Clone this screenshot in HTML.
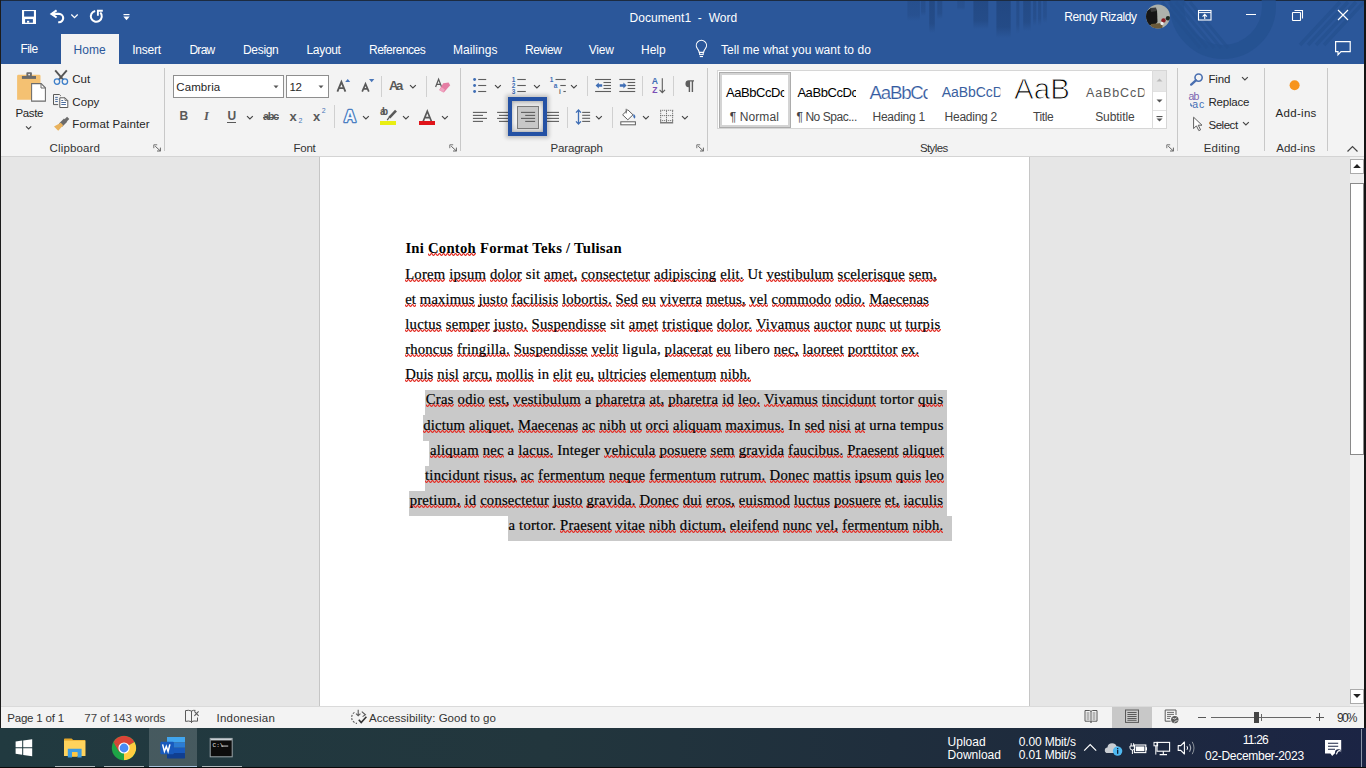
<!DOCTYPE html>
<html><head><meta charset="utf-8"><style>
html,body{margin:0;padding:0;}
body{width:1366px;height:768px;overflow:hidden;position:relative;background:#E6E6E6;font-family:"Liberation Sans", sans-serif;}
.t{position:absolute;white-space:pre;}
.sq{background-image:linear-gradient(90deg,rgba(227,52,44,0.45) 0 1px,transparent 1px 2px,rgba(227,52,44,0.45) 2px 3px,#E3342C 3px 4px),linear-gradient(90deg,#E3342C 0 1px,rgba(227,52,44,0.45) 1px 2px,#E3342C 2px 3px,rgba(227,52,44,0.45) 3px 4px),linear-gradient(90deg,rgba(227,52,44,0.45) 0 1px,#E3342C 1px 2px,rgba(227,52,44,0.45) 2px 3px,transparent 3px 4px);background-size:4px 1px,4px 1px,4px 1px;background-position:0 calc(100% - 2px),0 calc(100% - 1px),0 100%;background-repeat:repeat-x;}
svg{overflow:visible}
</style></head><body>
<div style="position:absolute;left:0px;top:0px;width:1366px;height:64px;background:#2B579A;"></div>
<div style="position:absolute;left:0px;top:0px;width:1366px;height:1px;background:#1c2b40;"></div>
<div style="position:absolute;left:0px;top:0px;width:1px;height:768px;background:#1c1c1c;"></div>
<div class="t" style="left:629.50px;top:11.84px;font-size:12px;line-height:12px;color:#FFFFFF;letter-spacing:0.031px;">Document1  -  Word</div>
<div class="t" style="left:1064.30px;top:11.34px;font-size:12px;line-height:12px;color:#FFFFFF;letter-spacing:-0.389px;">Rendy Rizaldy</div>
<div style="position:absolute;left:61px;top:34px;width:58px;height:30px;background:#F3F3F3;"></div>
<div class="t" style="left:20.50px;top:43.04px;font-size:12px;line-height:12px;color:#FFFFFF;letter-spacing:-0.587px;">File</div>
<div class="t" style="left:73.60px;top:43.84px;font-size:12px;line-height:12px;color:#2B579A;letter-spacing:0.055px;">Home</div>
<div class="t" style="left:132.20px;top:43.84px;font-size:12px;line-height:12px;color:#FFFFFF;letter-spacing:-0.216px;">Insert</div>
<div class="t" style="left:189.40px;top:43.84px;font-size:12px;line-height:12px;color:#FFFFFF;letter-spacing:-0.712px;">Draw</div>
<div class="t" style="left:243.00px;top:43.84px;font-size:12px;line-height:12px;color:#FFFFFF;letter-spacing:-0.316px;">Design</div>
<div class="t" style="left:306.50px;top:43.84px;font-size:12px;line-height:12px;color:#FFFFFF;letter-spacing:-0.319px;">Layout</div>
<div class="t" style="left:369.00px;top:43.84px;font-size:12px;line-height:12px;color:#FFFFFF;letter-spacing:-0.518px;">References</div>
<div class="t" style="left:453.00px;top:43.84px;font-size:12px;line-height:12px;color:#FFFFFF;letter-spacing:0.069px;">Mailings</div>
<div class="t" style="left:525.00px;top:43.84px;font-size:12px;line-height:12px;color:#FFFFFF;letter-spacing:-0.496px;">Review</div>
<div class="t" style="left:588.70px;top:43.84px;font-size:12px;line-height:12px;color:#FFFFFF;letter-spacing:-0.209px;">View</div>
<div class="t" style="left:641.00px;top:43.84px;font-size:12px;line-height:12px;color:#FFFFFF;letter-spacing:-0.035px;">Help</div>
<div class="t" style="left:721.00px;top:43.84px;font-size:12px;line-height:12px;color:#FFFFFF;letter-spacing:0.069px;">Tell me what you want to do</div>
<div style="position:absolute;left:1px;top:64px;width:1365px;height:92px;background:#F3F3F3;"></div>
<div style="position:absolute;left:1px;top:156px;width:1365px;height:1px;background:#D4D4D4;"></div>
<div style="position:absolute;left:164px;top:68px;width:1px;height:83px;background:#C8C8C8;"></div>
<div style="position:absolute;left:460px;top:68px;width:1px;height:83px;background:#C8C8C8;"></div>
<div style="position:absolute;left:707px;top:68px;width:1px;height:83px;background:#C8C8C8;"></div>
<div style="position:absolute;left:1177px;top:68px;width:1px;height:83px;background:#C8C8C8;"></div>
<div style="position:absolute;left:1264px;top:68px;width:1px;height:83px;background:#C8C8C8;"></div>
<div style="position:absolute;left:1327px;top:68px;width:1px;height:83px;background:#C8C8C8;"></div>
<div class="t" style="left:49.50px;top:143.06px;font-size:11.5px;line-height:11.5px;color:#333333;letter-spacing:0.159px;">Clipboard</div>
<div class="t" style="left:293.50px;top:143.06px;font-size:11.5px;line-height:11.5px;color:#333333;letter-spacing:-0.239px;">Font</div>
<div class="t" style="left:550.60px;top:143.06px;font-size:11.5px;line-height:11.5px;color:#333333;letter-spacing:-0.189px;">Paragraph</div>
<div class="t" style="left:920.00px;top:143.06px;font-size:11.5px;line-height:11.5px;color:#333333;letter-spacing:-0.633px;">Styles</div>
<div class="t" style="left:1203.70px;top:143.06px;font-size:11.5px;line-height:11.5px;color:#333333;letter-spacing:0.189px;">Editing</div>
<div class="t" style="left:1276.20px;top:143.06px;font-size:11.5px;line-height:11.5px;color:#333333;letter-spacing:0.026px;">Add-ins</div>
<div class="t" style="left:15.60px;top:107.96px;font-size:11.5px;line-height:11.5px;color:#262626;letter-spacing:-0.403px;">Paste</div>
<div class="t" style="left:72.30px;top:73.86px;font-size:11.5px;line-height:11.5px;color:#262626;letter-spacing:-0.050px;">Cut</div>
<div class="t" style="left:72.30px;top:96.66px;font-size:11.5px;line-height:11.5px;color:#262626;letter-spacing:0.068px;">Copy</div>
<div class="t" style="left:72.30px;top:119.46px;font-size:11.5px;line-height:11.5px;color:#262626;letter-spacing:0.091px;">Format Painter</div>
<div style="position:absolute;left:173px;top:75px;width:111px;height:23px;background:#FFFFFF;border:1px solid #8E8E8E;box-sizing:border-box;"></div>
<div style="position:absolute;left:286px;top:75px;width:43px;height:23px;background:#FFFFFF;border:1px solid #8E8E8E;box-sizing:border-box;"></div>
<div class="t" style="left:176.30px;top:81.86px;font-size:11.5px;line-height:11.5px;color:#262626;letter-spacing:0.073px;">Cambria</div>
<div class="t" style="left:289.40px;top:81.86px;font-size:11.5px;line-height:11.5px;color:#262626;letter-spacing:-0.196px;">12</div>
<div style="position:absolute;left:717px;top:70px;width:450px;height:59px;background:#FFFFFF;border:1px solid #D6D6D6;box-sizing:border-box;"></div>
<div class="t" style="left:726.00px;top:85.59px;font-size:13px;line-height:13px;color:#000000;letter-spacing:-0.440px;clip-path:inset(-13.59px 1.86px -29.41px -4.00px);">AaBbCcDc</div>
<div class="t" style="left:729.70px;top:110.74px;font-size:12px;line-height:12px;color:#444444;letter-spacing:0.102px;">¶ Normal</div>
<div class="t" style="left:797.40px;top:85.59px;font-size:13px;line-height:13px;color:#000000;letter-spacing:-0.440px;clip-path:inset(-13.59px 1.46px -29.41px -4.40px);">AaBbCcDc</div>
<div class="t" style="left:796.50px;top:110.74px;font-size:12px;line-height:12px;color:#444444;letter-spacing:-0.452px;">¶ No Spac...</div>
<div class="t" style="left:869.60px;top:84.17px;font-size:18.7px;line-height:18.7px;color:#3259A0;letter-spacing:-1.242px;-webkit-text-stroke:0.2px #fff;clip-path:inset(-12.17px 3.10px -25.13px -4.60px);">AaBbCc</div>
<div class="t" style="left:872.50px;top:110.74px;font-size:12px;line-height:12px;color:#444444;letter-spacing:-0.254px;">Heading 1</div>
<div class="t" style="left:941.80px;top:85.45px;font-size:14px;line-height:14px;color:#3A5FA0;letter-spacing:-0.060px;clip-path:inset(-13.45px 2.45px -28.55px -4.80px);">AaBbCcD</div>
<div class="t" style="left:944.60px;top:110.74px;font-size:12px;line-height:12px;color:#444444;letter-spacing:-0.254px;">Heading 2</div>
<div class="t" style="left:1014.00px;top:73.82px;font-size:29.5px;line-height:29.5px;color:#000000;letter-spacing:0.059px;-webkit-text-stroke:1px #fff;clip-path:inset(5.78px -10.07px -24.68px -6.00px);">AaB</div>
<div class="t" style="left:1033.00px;top:110.74px;font-size:12px;line-height:12px;color:#444444;letter-spacing:-0.413px;">Title</div>
<div class="t" style="left:1086.00px;top:87.02px;font-size:12.5px;line-height:12.5px;color:#595959;letter-spacing:0.857px;clip-path:inset(-15.02px 2.38px -28.48px -6.00px);">AaBbCcD</div>
<div class="t" style="left:1095.20px;top:110.74px;font-size:12px;line-height:12px;color:#444444;letter-spacing:-0.079px;">Subtitle</div>
<div class="t" style="left:1208.50px;top:73.76px;font-size:11.5px;line-height:11.5px;color:#262626;letter-spacing:-0.158px;">Find</div>
<div class="t" style="left:1208.50px;top:97.06px;font-size:11.5px;line-height:11.5px;color:#262626;letter-spacing:-0.216px;">Replace</div>
<div class="t" style="left:1208.50px;top:119.66px;font-size:11.5px;line-height:11.5px;color:#262626;letter-spacing:-0.473px;">Select</div>
<div class="t" style="left:1275.50px;top:107.76px;font-size:11.5px;line-height:11.5px;color:#262626;letter-spacing:0.310px;">Add-ins</div>
<div style="position:absolute;left:1px;top:157px;width:1349px;height:549px;background:#E6E6E6;"></div>
<div style="position:absolute;left:319px;top:157px;width:1px;height:549px;background:#C6C6C6;"></div>
<div style="position:absolute;left:1029px;top:157px;width:1px;height:549px;background:#C6C6C6;"></div>
<div style="position:absolute;left:320px;top:157px;width:709px;height:549px;background:#FFFFFF;"></div>
<div style="position:absolute;left:1350px;top:157px;width:14px;height:549px;background:#F0F0F0;"></div>
<div style="position:absolute;left:1364px;top:157px;width:2px;height:549px;background:#1c1c1c;"></div>
<div style="position:absolute;left:1px;top:706px;width:1365px;height:22px;background:#F3F3F3;"></div>
<div style="position:absolute;left:1px;top:706px;width:1365px;height:1px;background:#DADADA;"></div>
<div class="t" style="left:7.20px;top:713.06px;font-size:11.5px;line-height:11.5px;color:#333333;letter-spacing:-0.183px;">Page 1 of 1</div>
<div class="t" style="left:84.30px;top:713.06px;font-size:11.5px;line-height:11.5px;color:#444444;letter-spacing:-0.056px;">77 of 143 words</div>
<div class="t" style="left:216.50px;top:713.06px;font-size:11.5px;line-height:11.5px;color:#333333;letter-spacing:0.236px;">Indonesian</div>
<div class="t" style="left:369.00px;top:713.06px;font-size:11.5px;line-height:11.5px;color:#333333;letter-spacing:0.041px;">Accessibility: Good to go</div>
<div style="position:absolute;left:1112px;top:707px;width:40px;height:21px;background:#C8C8C8;"></div>
<div class="t" style="left:1337.00px;top:711.84px;font-size:12px;line-height:12px;color:#333333;letter-spacing:-1.774px;">90%</div>
<div style="position:absolute;left:0px;top:728px;width:1366px;height:40px;background:linear-gradient(90deg,#213A40 0%,#22363D 40%,#1E2B3D 75%,#1B2444 100%);"></div>
<div style="position:absolute;left:149px;top:728px;width:48px;height:40px;background:rgba(255,255,255,0.17);"></div>
<div class="t" style="left:947.60px;top:736.04px;font-size:12px;line-height:12px;color:#FFFFFF;">Upload</div>
<div class="t" style="left:947.60px;top:748.84px;font-size:12px;line-height:12px;color:#FFFFFF;">Download</div>
<div class="t" style="left:1018.70px;top:736.04px;font-size:12px;line-height:12px;color:#FFFFFF;letter-spacing:-0.149px;">0.00 Mbit/s</div>
<div class="t" style="left:1018.70px;top:748.84px;font-size:12px;line-height:12px;color:#FFFFFF;letter-spacing:-0.149px;">0.01 Mbit/s</div>
<div class="t" style="left:1242.80px;top:733.84px;font-size:12px;line-height:12px;color:#FFFFFF;letter-spacing:-0.816px;">11:26</div>
<div class="t" style="left:1205.00px;top:750.44px;font-size:12px;line-height:12px;color:#FFFFFF;letter-spacing:-0.288px;">02-December-2023</div>
<div style="position:absolute;left:425.3px;top:390.2px;width:521.8px;height:25.349999999999998px;background:#C9C9C9;"></div>
<div style="position:absolute;left:422.7px;top:415.35px;width:524.4px;height:25.349999999999998px;background:#C9C9C9;"></div>
<div style="position:absolute;left:429.4px;top:440.5px;width:517.7px;height:25.349999999999998px;background:#C9C9C9;"></div>
<div style="position:absolute;left:424.7px;top:465.65px;width:522.4px;height:25.349999999999998px;background:#C9C9C9;"></div>
<div style="position:absolute;left:409.0px;top:490.8px;width:538.1px;height:25.349999999999998px;background:#C9C9C9;"></div>
<div style="position:absolute;left:508.0px;top:515.95px;width:443.9px;height:25.349999999999998px;background:#C9C9C9;"></div>
<div class="t" style="left:405.40px;top:240.59px;font-size:14.7px;line-height:14.7px;color:#000000;font-family:'Liberation Serif', serif;font-weight:bold;letter-spacing:0.245px;">Ini <span class="sq">Contoh</span> Format Teks / Tulisan</div>
<div class="t" style="left:405.20px;top:266.74px;font-size:14.7px;line-height:14.7px;color:#000000;font-family:'Liberation Serif', serif;letter-spacing:0.193px;-webkit-text-stroke:0.2px #000;"><span class="sq">Lorem</span> <span class="sq">ipsum</span> <span class="sq">dolor</span> sit <span class="sq">amet,</span> <span class="sq">consectetur</span> <span class="sq">adipiscing</span> <span class="sq">elit.</span> Ut <span class="sq">vestibulum</span> <span class="sq">scelerisque</span> <span class="sq">sem,</span></div>
<div class="t" style="left:405.20px;top:291.89px;font-size:14.7px;line-height:14.7px;color:#000000;font-family:'Liberation Serif', serif;letter-spacing:0.126px;-webkit-text-stroke:0.2px #000;"><span class="sq">et</span> <span class="sq">maximus</span> <span class="sq">justo</span> <span class="sq">facilisis</span> <span class="sq">lobortis.</span> <span class="sq">Sed</span> <span class="sq">eu</span> <span class="sq">viverra</span> <span class="sq">metus,</span> <span class="sq">vel</span> <span class="sq">commodo</span> <span class="sq">odio.</span> <span class="sq">Maecenas</span></div>
<div class="t" style="left:405.20px;top:317.04px;font-size:14.7px;line-height:14.7px;color:#000000;font-family:'Liberation Serif', serif;letter-spacing:0.263px;-webkit-text-stroke:0.2px #000;"><span class="sq">luctus</span> <span class="sq">semper</span> <span class="sq">justo.</span> <span class="sq">Suspendisse</span> sit <span class="sq">amet</span> <span class="sq">tristique</span> <span class="sq">dolor.</span> <span class="sq">Vivamus</span> <span class="sq">auctor</span> <span class="sq">nunc</span> <span class="sq">ut</span> <span class="sq">turpis</span></div>
<div class="t" style="left:405.20px;top:342.19px;font-size:14.7px;line-height:14.7px;color:#000000;font-family:'Liberation Serif', serif;letter-spacing:0.188px;-webkit-text-stroke:0.2px #000;"><span class="sq">rhoncus</span> <span class="sq">fringilla.</span> <span class="sq">Suspendisse</span> <span class="sq">velit</span> ligula, <span class="sq">placerat</span> <span class="sq">eu</span> libero <span class="sq">nec,</span> <span class="sq">laoreet</span> <span class="sq">porttitor</span> <span class="sq">ex.</span></div>
<div class="t" style="left:405.20px;top:367.34px;font-size:14.7px;line-height:14.7px;color:#000000;font-family:'Liberation Serif', serif;letter-spacing:0.126px;-webkit-text-stroke:0.2px #000;"><span class="sq">Duis</span> <span class="sq">nisl</span> <span class="sq">arcu,</span> <span class="sq">mollis</span> in <span class="sq">elit</span> <span class="sq">eu,</span> <span class="sq">ultricies</span> <span class="sq">elementum</span> <span class="sq">nibh.</span></div>
<div class="t" style="left:425.80px;top:392.49px;font-size:14.7px;line-height:14.7px;color:#000000;font-family:'Liberation Serif', serif;letter-spacing:0.231px;-webkit-text-stroke:0.2px #000;"><span class="sq">Cras</span> <span class="sq">odio</span> <span class="sq">est,</span> <span class="sq">vestibulum</span> a <span class="sq">pharetra</span> <span class="sq">at,</span> <span class="sq">pharetra</span> <span class="sq">id</span> <span class="sq">leo.</span> <span class="sq">Vivamus</span> <span class="sq">tincidunt</span> tortor <span class="sq">quis</span></div>
<div class="t" style="left:423.20px;top:417.64px;font-size:14.7px;line-height:14.7px;color:#000000;font-family:'Liberation Serif', serif;letter-spacing:0.181px;-webkit-text-stroke:0.2px #000;"><span class="sq">dictum</span> <span class="sq">aliquet.</span> <span class="sq">Maecenas</span> <span class="sq">ac</span> <span class="sq">nibh</span> <span class="sq">ut</span> <span class="sq">orci</span> <span class="sq">aliquam</span> <span class="sq">maximus.</span> In <span class="sq">sed</span> <span class="sq">nisi</span> <span class="sq">at</span> urna tempus</div>
<div class="t" style="left:430.00px;top:442.79px;font-size:14.7px;line-height:14.7px;color:#000000;font-family:'Liberation Serif', serif;letter-spacing:0.208px;-webkit-text-stroke:0.2px #000;"><span class="sq">aliquam</span> <span class="sq">nec</span> a <span class="sq">lacus.</span> Integer <span class="sq">vehicula</span> <span class="sq">posuere</span> <span class="sq">sem</span> <span class="sq">gravida</span> <span class="sq">faucibus.</span> <span class="sq">Praesent</span> <span class="sq">aliquet</span></div>
<div class="t" style="left:425.00px;top:467.94px;font-size:14.7px;line-height:14.7px;color:#000000;font-family:'Liberation Serif', serif;letter-spacing:0.267px;-webkit-text-stroke:0.2px #000;"><span class="sq">tincidunt</span> <span class="sq">risus,</span> <span class="sq">ac</span> <span class="sq">fermentum</span> <span class="sq">neque</span> <span class="sq">fermentum</span> <span class="sq">rutrum.</span> <span class="sq">Donec</span> <span class="sq">mattis</span> <span class="sq">ipsum</span> <span class="sq">quis</span> <span class="sq">leo</span></div>
<div class="t" style="left:409.70px;top:493.09px;font-size:14.7px;line-height:14.7px;color:#000000;font-family:'Liberation Serif', serif;letter-spacing:0.190px;-webkit-text-stroke:0.2px #000;"><span class="sq">pretium,</span> <span class="sq">id</span> <span class="sq">consectetur</span> <span class="sq">justo</span> <span class="sq">gravida.</span> <span class="sq">Donec</span> <span class="sq">dui</span> <span class="sq">eros,</span> <span class="sq">euismod</span> <span class="sq">luctus</span> <span class="sq">posuere</span> <span class="sq">et,</span> <span class="sq">iaculis</span></div>
<div class="t" style="left:508.50px;top:518.24px;font-size:14.7px;line-height:14.7px;color:#000000;font-family:'Liberation Serif', serif;letter-spacing:0.217px;-webkit-text-stroke:0.2px #000;">a tortor. <span class="sq">Praesent</span> <span class="sq">vitae</span> <span class="sq">nibh</span> <span class="sq">dictum,</span> <span class="sq">eleifend</span> <span class="sq">nunc</span> <span class="sq">vel,</span> <span class="sq">fermentum</span> <span class="sq">nibh.</span></div>
<svg style="position:absolute;left:22px;top:10px;" width="14" height="14" viewBox="0 0 14 14"><rect x="0" y="0" width="14" height="14" fill="#FFFFFF"/><rect x="2.1" y="1.1" width="9.8" height="5.5" fill="#2B579A"/><rect x="3.1" y="9.1" width="7.8" height="3.6" fill="#2B579A"/><rect x="5" y="10.8" width="2.2" height="1.9" fill="#FFFFFF"/></svg>
<svg style="position:absolute;left:50px;top:9px;" width="16" height="15" viewBox="0 0 16 15"><path d="M6.6 1.3 L1.5 4.9 L6.6 8.5" fill="none" stroke="#FFFFFF" stroke-width="2.1" stroke-linejoin="miter"/><path d="M2 4.9 H9 A4.2 4.2 0 0 1 9 13.3 H8.2" fill="none" stroke="#FFFFFF" stroke-width="2.1"/></svg>
<svg style="position:absolute;left:70px;top:13px;" width="9" height="6" viewBox="0 0 9 6"><path d="M1.3 1.5 L4.5 4.6 L7.7 1.5" fill="none" stroke="#FFFFFF" stroke-width="1.3"/></svg>
<svg style="position:absolute;left:89px;top:9px;" width="16" height="15" viewBox="0 0 16 15"><path d="M6.2 1.9 A5.5 5.5 0 1 0 11.3 3.5" fill="none" stroke="#FFFFFF" stroke-width="2"/><path d="M8.9 6.8 V1.8 H13.8" fill="none" stroke="#FFFFFF" stroke-width="1.9"/></svg>
<svg style="position:absolute;left:122px;top:13px;" width="9" height="9" viewBox="0 0 9 9"><rect x="1.5" y="1" width="6" height="1.2" fill="#FFFFFF"/><path d="M1.3 3.4 H7.7 L4.5 7.3 Z" fill="#FFFFFF"/></svg>
<svg style="position:absolute;left:900px;top:0px;" width="466" height="64" viewBox="0 0 466 64"><defs><linearGradient id="bf" x1="0" y1="0" x2="0" y2="1"><stop offset="0" stop-color="#21467F" stop-opacity="1"/><stop offset="0.7" stop-color="#21467F" stop-opacity="0.8"/><stop offset="1" stop-color="#21467F" stop-opacity="0"/></linearGradient></defs><rect x="7.4" y="1" width="12.5" height="20" fill="url(#bf)" opacity="0.45"/><rect x="21.0" y="1" width="4.5" height="15" fill="url(#bf)" opacity="0.5"/><rect x="29.2" y="1" width="5.6" height="32" fill="url(#bf)" opacity="0.8"/><rect x="37.3" y="1" width="5" height="18" fill="url(#bf)" opacity="0.6"/><rect x="57.2" y="1" width="7.5" height="9" fill="url(#bf)" opacity="0.4"/><rect x="73.4" y="1" width="14.9" height="28" fill="url(#bf)" opacity="0.8"/><rect x="96.4" y="1" width="14.3" height="37" fill="url(#bf)" opacity="0.9"/><rect x="116.3" y="1" width="3.1" height="33" fill="url(#bf)" opacity="0.6"/><rect x="123.2" y="1" width="7.5" height="30" fill="url(#bf)" opacity="0.75"/><rect x="133.1" y="1" width="3.2" height="25" fill="url(#bf)" opacity="0.6"/><rect x="138.1" y="1" width="3.1" height="25" fill="url(#bf)" opacity="0.6"/><rect x="143.1" y="1" width="3.7" height="22" fill="url(#bf)" opacity="0.5"/><circle cx="323" cy="6" r="46" fill="none" stroke="#24508F" stroke-width="14" opacity="0.75"/><line x1="262" y1="2" x2="300" y2="48" stroke="#24508F" stroke-width="3" opacity="0.7"/><line x1="269" y1="2" x2="307" y2="48" stroke="#24508F" stroke-width="3" opacity="0.7"/><line x1="276" y1="2" x2="314" y2="48" stroke="#24508F" stroke-width="3" opacity="0.7"/><line x1="283" y1="2" x2="321" y2="48" stroke="#24508F" stroke-width="3" opacity="0.7"/><line x1="290" y1="2" x2="328" y2="48" stroke="#24508F" stroke-width="3" opacity="0.7"/><line x1="440" y1="2" x2="400" y2="45" stroke="#24508F" stroke-width="3.5" opacity="0.7"/><line x1="448" y1="2" x2="408" y2="45" stroke="#24508F" stroke-width="3.5" opacity="0.7"/><line x1="456" y1="2" x2="416" y2="45" stroke="#24508F" stroke-width="3.5" opacity="0.7"/><line x1="464" y1="2" x2="424" y2="45" stroke="#24508F" stroke-width="3.5" opacity="0.7"/></svg>
<svg style="position:absolute;left:1145px;top:4px;" width="26" height="26" viewBox="0 0 26 26"><defs><clipPath id="av"><circle cx="13" cy="12.6" r="12"/></clipPath><filter id="avb"><feGaussianBlur stdDeviation="0.7"/></filter></defs><g clip-path="url(#av)"><rect width="26" height="26" fill="#AEB2AC"/><g filter="url(#avb)"><path d="M1 9 Q3 4 8 4.5 L12 6 L12.5 18 L9 22 L3 21 L1 15 Z" fill="#151815"/><path d="M5 4 L11 3.5 L12 7 L6 8 Z" fill="#3a3a3a"/><path d="M6 20 L17 19 L18 26 L5 26 Z" fill="#6B5A3A"/><circle cx="18.5" cy="16.4" r="2.2" fill="#8A1A22"/><circle cx="23" cy="14.2" r="2.2" fill="#1E2A22"/><circle cx="17" cy="19.4" r="1.6" fill="#F0F0F0"/></g></g></svg>
<svg style="position:absolute;left:1197px;top:9px;" width="16" height="13" viewBox="0 0 16 13"><rect x="1.5" y="1.5" width="12.5" height="9.5" fill="none" stroke="#FFFFFF" stroke-width="1.1"/><line x1="1.5" y1="3.6" x2="14" y2="3.6" stroke="#FFFFFF" stroke-width="1"/><path d="M7.75 10 V5.6 M5.6 7.6 L7.75 5.4 L9.9 7.6" fill="none" stroke="#FFFFFF" stroke-width="1.1"/></svg>
<div style="position:absolute;left:1246px;top:14px;width:10px;height:1px;background:#FFFFFF;"></div>
<svg style="position:absolute;left:1291px;top:9px;" width="13" height="13" viewBox="0 0 13 13"><rect x="1.5" y="3.5" width="8" height="8" fill="none" stroke="#FFFFFF" stroke-width="1.1" rx="0.5"/><path d="M3.5 1.5 H11.5 V9.5" fill="none" stroke="#FFFFFF" stroke-width="1.1"/></svg>
<svg style="position:absolute;left:1337px;top:9px;" width="12" height="12" viewBox="0 0 12 12"><path d="M1 1 L11 11 M11 1 L1 11" stroke="#FFFFFF" stroke-width="1.2"/></svg>
<svg style="position:absolute;left:1334px;top:40px;" width="18" height="17" viewBox="0 0 18 17"><path d="M1.6 1.6 H16.2 V11.6 H7 L4 14.8 V11.6 H1.6 Z" fill="none" stroke="#FFFFFF" stroke-width="1.2" stroke-linejoin="miter"/></svg>
<svg style="position:absolute;left:16px;top:71px;" width="30" height="32" viewBox="0 0 30 32"><path d="M1.1 5 Q1.1 3.7 2.4 3.7 H23.2 Q24.5 3.7 24.5 5 V28.7 H1.1 Z" fill="#F4C172"/><rect x="5.9" y="5" width="14.1" height="2.9" fill="#6B6B6B"/><rect x="10.4" y="1.2" width="5.5" height="4.2" rx="0.8" fill="#6B6B6B"/><circle cx="13.1" cy="3.6" r="0.9" fill="#F3F3F3"/><path d="M15.6 12.6 H25.2 L29.4 16.8 V30.1 H15.6 Z" fill="#FFFFFF" stroke="#6B6B6B" stroke-width="1.05"/><path d="M25 12.6 V17 H29.4" fill="none" stroke="#6B6B6B" stroke-width="1"/></svg>
<svg style="position:absolute;left:25px;top:125px;" width="8" height="6" viewBox="0 0 8 6"><path d="M1 1.3 L3.6 3.9 L6.2 1.3" fill="none" stroke="#444" stroke-width="1.1"/></svg>
<svg style="position:absolute;left:53px;top:69px;" width="16" height="17" viewBox="0 0 16 17"><path d="M2.2 1.4 L10.4 10.8 M13.8 1.4 L5.6 10.8" stroke="#555555" stroke-width="1.9"/><circle cx="4" cy="12.6" r="2.7" fill="none" stroke="#3E7FC9" stroke-width="1.3"/><circle cx="11.9" cy="12.6" r="2.7" fill="none" stroke="#3E7FC9" stroke-width="1.3"/></svg>
<svg style="position:absolute;left:52px;top:93px;" width="17" height="16" viewBox="0 0 17 16"><path d="M6.2 11.6 H1.5 V1.5 H7.4 L8.8 2.9" fill="none" stroke="#5A5A5A" stroke-width="1"/><rect x="3.2" y="3.9" width="2.6" height="1" fill="#4D6E9E"/><rect x="3.2" y="5.9" width="2.6" height="1" fill="#4D6E9E"/><rect x="3.2" y="8" width="2.6" height="1" fill="#4D6E9E"/><path d="M7.8 4.8 H13 L15.8 7.6 V14.5 H7.8 Z" fill="#FFFFFF" stroke="#5A5A5A" stroke-width="1"/><path d="M13 4.8 V7.6 H15.8" fill="none" stroke="#5A5A5A" stroke-width="0.8"/><rect x="9.3" y="7" width="1.9" height="1" fill="#4D6E9E"/><rect x="9.3" y="9" width="4.6" height="1" fill="#4D6E9E"/><rect x="9.3" y="11" width="4.6" height="1" fill="#4D6E9E"/></svg>
<svg style="position:absolute;left:53px;top:116px;" width="17" height="16" viewBox="0 0 17 16"><path d="M15.2 1.8 L12.2 4.8" stroke="#6B6B6B" stroke-width="3.2"/><path d="M12.6 4.2 L7.6 9.2" stroke="#6B6B6B" stroke-width="4.6"/><path d="M7.8 6.8 L10.2 9.2 L5.2 14.8 L1 10.6 Z" fill="#E9B25C"/></svg>
<svg style="position:absolute;left:153px;top:144px;" width="9" height="8" viewBox="0 0 9 8"><path d="M0.8 0.8 H4.2 M0.8 0.8 V4.2" stroke="#666" stroke-width="0.9" fill="none"/><path d="M2.2 2.2 L7.4 7 M7.4 3.6 V7 H4" stroke="#666" stroke-width="1" fill="none"/></svg>
<svg style="position:absolute;left:448.5px;top:144px;" width="9" height="8" viewBox="0 0 9 8"><path d="M0.8 0.8 H4.2 M0.8 0.8 V4.2" stroke="#666" stroke-width="0.9" fill="none"/><path d="M2.2 2.2 L7.4 7 M7.4 3.6 V7 H4" stroke="#666" stroke-width="1" fill="none"/></svg>
<svg style="position:absolute;left:695.5px;top:144px;" width="9" height="8" viewBox="0 0 9 8"><path d="M0.8 0.8 H4.2 M0.8 0.8 V4.2" stroke="#666" stroke-width="0.9" fill="none"/><path d="M2.2 2.2 L7.4 7 M7.4 3.6 V7 H4" stroke="#666" stroke-width="1" fill="none"/></svg>
<svg style="position:absolute;left:1165.5px;top:144px;" width="9" height="8" viewBox="0 0 9 8"><path d="M0.8 0.8 H4.2 M0.8 0.8 V4.2" stroke="#666" stroke-width="0.9" fill="none"/><path d="M2.2 2.2 L7.4 7 M7.4 3.6 V7 H4" stroke="#666" stroke-width="1" fill="none"/></svg>
<svg style="position:absolute;left:273px;top:85px;" width="7" height="4" viewBox="0 0 7 4"><path d="M0.5 0.5 H5.5 L3 3.2 Z" fill="#555"/></svg>
<svg style="position:absolute;left:318px;top:85px;" width="7" height="4" viewBox="0 0 7 4"><path d="M0.5 0.5 H5.5 L3 3.2 Z" fill="#555"/></svg>
<svg style="position:absolute;left:336px;top:78px;" width="16" height="15" viewBox="0 0 16 15"><path d="M1.4 13.7 L5.4 3.9 L9.4 13.7 M2.9 10.2 H7.9" fill="none" stroke="#595959" stroke-width="1.8"/><path d="M9.2 4 L11.7 1 L14.2 4 Z" fill="#4A76B8"/></svg>
<svg style="position:absolute;left:361px;top:78px;" width="15" height="15" viewBox="0 0 15 15"><path d="M1.2 13.7 L4.5 5.9 L7.8 13.7 M2.5 10.9 H6.5" fill="none" stroke="#595959" stroke-width="1.7"/><path d="M8 1 H13.3 L10.65 4.2 Z" fill="#4A76B8"/></svg>
<div class="t" style="left:389.00px;top:78.99px;font-size:13px;line-height:13px;color:#595959;font-weight:bold;letter-spacing:-2.388px;">Aa</div>
<svg style="position:absolute;left:409px;top:84px;" width="8" height="6" viewBox="0 0 8 6"><path d="M1 1.2 L3.9 4 L6.8 1.2" fill="none" stroke="#444" stroke-width="1.15"/></svg>
<svg style="position:absolute;left:434px;top:78px;" width="18" height="17" viewBox="0 0 18 17"><path d="M1.6 9 L4.6 1.2 L7.6 9 M2.6 6.4 H6.6" fill="none" stroke="#595959" stroke-width="1.2"/><path d="M9.2 5.2 L14.6 4.6 L16.2 7.2 L9.8 14.6 L5.2 12 Z" fill="#E57DA3"/><path d="M5.2 12 L7.6 9.2 L10.8 11.6 L9.2 14.6 Z" fill="#EFA3BF"/></svg>
<div class="t" style="left:179.60px;top:110.44px;font-size:12px;line-height:12px;color:#595959;font-weight:bold;">B</div>
<div class="t" style="left:204.00px;top:110.13px;font-size:12.5px;line-height:12.5px;color:#595959;font-family:'Liberation Serif', serif;font-weight:bold;font-style:italic;">I</div>
<div class="t" style="left:227.40px;top:110.44px;font-size:12px;line-height:12px;color:#595959;font-weight:bold;">U</div>
<div style="position:absolute;left:227.4px;top:122px;width:8.2px;height:1.2px;background:#595959;"></div>
<svg style="position:absolute;left:246px;top:114.5px;" width="8" height="6" viewBox="0 0 8 6"><path d="M1 1.2 L3.9 4 L6.8 1.2" fill="none" stroke="#444" stroke-width="1.15"/></svg>
<div class="t" style="left:263.10px;top:111.29px;font-size:11px;line-height:11px;color:#595959;font-weight:bold;letter-spacing:-1.518px;">abc</div>
<div style="position:absolute;left:262.6px;top:116.6px;width:16.8px;height:1.1px;background:#595959;"></div>
<div class="t" style="left:289.40px;top:109.59px;font-size:13px;line-height:13px;color:#595959;font-weight:bold;">x</div>
<div class="t" style="left:298.40px;top:117.07px;font-size:7px;line-height:7px;color:#4A76B8;">2</div>
<div class="t" style="left:312.90px;top:109.59px;font-size:13px;line-height:13px;color:#595959;font-weight:bold;">x</div>
<div class="t" style="left:321.80px;top:106.57px;font-size:7px;line-height:7px;color:#4A76B8;">2</div>
<svg style="position:absolute;left:341px;top:107px;" width="18" height="18" viewBox="0 0 18 18"><text x="9" y="15.2" text-anchor="middle" font-family="Liberation Sans" font-weight="bold" font-size="16.5" fill="#F4F8FD" stroke="#4C7EC0" stroke-width="2.6" paint-order="stroke fill" stroke-linejoin="round">A</text></svg>
<svg style="position:absolute;left:362px;top:114.8px;" width="8" height="6" viewBox="0 0 8 6"><path d="M1 1.2 L3.9 4 L6.8 1.2" fill="none" stroke="#444" stroke-width="1.15"/></svg>
<div class="t" style="left:380.00px;top:106.83px;font-size:10px;line-height:10px;color:#595959;font-weight:bold;letter-spacing:-3.562px;">ab</div>
<svg style="position:absolute;left:385px;top:109px;" width="13" height="13" viewBox="0 0 13 13"><path d="M11 1.6 L4.4 8.6" stroke="#595959" stroke-width="2.6"/><path d="M5.2 7.4 L2.2 11 L3.6 9.2 Z" stroke="#595959" stroke-width="1.2"/></svg>
<div style="position:absolute;left:380px;top:120.6px;width:16.2px;height:4.7px;background:#E9EE12;"></div>
<svg style="position:absolute;left:402px;top:114.8px;" width="8" height="6" viewBox="0 0 8 6"><path d="M1 1.2 L3.9 4 L6.8 1.2" fill="none" stroke="#444" stroke-width="1.15"/></svg>
<svg style="position:absolute;left:421px;top:109px;" width="13" height="13" viewBox="0 0 13 13"><path d="M2.2 12.2 L6.3 2.2 L10.4 12.2 M3.6 8.6 H9" fill="none" stroke="#595959" stroke-width="1.7"/></svg>
<div style="position:absolute;left:419px;top:121px;width:16.2px;height:4px;background:#E0141A;"></div>
<svg style="position:absolute;left:441px;top:114.8px;" width="8" height="6" viewBox="0 0 8 6"><path d="M1 1.2 L3.9 4 L6.8 1.2" fill="none" stroke="#444" stroke-width="1.15"/></svg>
<div style="position:absolute;left:381px;top:76px;width:1px;height:21px;background:#D0D0D0;"></div>
<div style="position:absolute;left:426px;top:76px;width:1px;height:21px;background:#D0D0D0;"></div>
<div style="position:absolute;left:334px;top:105px;width:1px;height:23px;background:#D0D0D0;"></div>
<svg style="position:absolute;left:470px;top:75px;" width="20" height="20" viewBox="0 0 20 20"><g transform="translate(-470,-75)"><circle cx="474.6" cy="79.5" r="1.45" fill="#3F6EB5"/><rect x="478.2" y="78.95" width="8.00" height="1.1" fill="#5E5E5E"/><circle cx="474.6" cy="85.5" r="1.45" fill="#3F6EB5"/><rect x="478.2" y="84.95" width="8.00" height="1.1" fill="#5E5E5E"/><circle cx="474.6" cy="91.5" r="1.45" fill="#3F6EB5"/><rect x="478.2" y="90.95" width="8.00" height="1.1" fill="#5E5E5E"/></g></svg>
<svg style="position:absolute;left:494px;top:83.8px;" width="8" height="6" viewBox="0 0 8 6"><path d="M1 1.2 L3.9 4 L6.8 1.2" fill="none" stroke="#444" stroke-width="1.15"/></svg>
<svg style="position:absolute;left:508px;top:75px;" width="22" height="20" viewBox="0 0 22 20"><g transform="translate(-508,-75)"><text x="513.5" y="82.1" font-family="Liberation Sans" font-weight="bold" font-size="6.5" fill="#3F6EB5" text-anchor="middle">1</text><rect x="517.3" y="78.95" width="8.50" height="1.1" fill="#5E5E5E"/><text x="513.5" y="88.1" font-family="Liberation Sans" font-weight="bold" font-size="6.5" fill="#3F6EB5" text-anchor="middle">2</text><rect x="517.3" y="84.95" width="8.50" height="1.1" fill="#5E5E5E"/><text x="513.5" y="94.1" font-family="Liberation Sans" font-weight="bold" font-size="6.5" fill="#3F6EB5" text-anchor="middle">3</text><rect x="517.3" y="90.95" width="8.50" height="1.1" fill="#5E5E5E"/></g></svg>
<svg style="position:absolute;left:533px;top:83.8px;" width="8" height="6" viewBox="0 0 8 6"><path d="M1 1.2 L3.9 4 L6.8 1.2" fill="none" stroke="#444" stroke-width="1.15"/></svg>
<svg style="position:absolute;left:546px;top:75px;" width="24" height="22" viewBox="0 0 24 22"><g transform="translate(-546,-75)"><text x="551.5" y="82.1" font-family="Liberation Sans" font-weight="bold" font-size="6.5" fill="#3F6EB5" text-anchor="middle">1</text><rect x="555.5" y="78.95" width="10.30" height="1.1" fill="#5E5E5E"/><text x="555.6" y="87.9" font-family="Liberation Sans" font-weight="bold" font-size="6.5" fill="#3F6EB5" text-anchor="middle">a</text><rect x="560.3" y="84.95" width="5.50" height="1.1" fill="#5E5E5E"/><text x="559.8" y="94.1" font-family="Liberation Sans" font-weight="bold" font-size="6.5" fill="#5E5E5E" text-anchor="middle">i</text><rect x="563.4" y="90.95" width="2.40" height="1.1" fill="#5E5E5E"/></g></svg>
<svg style="position:absolute;left:570px;top:83.8px;" width="8" height="6" viewBox="0 0 8 6"><path d="M1 1.2 L3.9 4 L6.8 1.2" fill="none" stroke="#444" stroke-width="1.15"/></svg>
<div style="position:absolute;left:587px;top:76px;width:1px;height:20px;background:#D0D0D0;"></div>
<svg style="position:absolute;left:592px;top:75px;" width="22" height="20" viewBox="0 0 22 20"><g transform="translate(-592,-75)"><rect x="595.1" y="78.95" width="15.90" height="1.1" fill="#5E5E5E"/><rect x="603.5" y="81.95" width="7.50" height="1.1" fill="#5E5E5E"/><rect x="603.5" y="84.95" width="7.50" height="1.1" fill="#5E5E5E"/><rect x="603.5" y="87.95" width="7.50" height="1.1" fill="#5E5E5E"/><rect x="595.1" y="90.95" width="15.90" height="1.1" fill="#5E5E5E"/><path d="M595.6 85.5 L598.8 82.4 V84.2 H602.2 V86.8 H598.8 V88.6 Z" fill="#3F6EB5"/></g></svg>
<svg style="position:absolute;left:616px;top:75px;" width="22" height="20" viewBox="0 0 22 20"><g transform="translate(-616,-75)"><rect x="619.3" y="78.95" width="15.90" height="1.1" fill="#5E5E5E"/><rect x="627.6" y="81.95" width="7.60" height="1.1" fill="#5E5E5E"/><rect x="627.6" y="84.95" width="7.60" height="1.1" fill="#5E5E5E"/><rect x="627.6" y="87.95" width="7.60" height="1.1" fill="#5E5E5E"/><rect x="619.3" y="90.95" width="15.90" height="1.1" fill="#5E5E5E"/><path d="M626.6 85.5 L623.4 82.4 V84.2 H619.8 V86.8 H623.4 V88.6 Z" fill="#3F6EB5"/></g></svg>
<div style="position:absolute;left:642px;top:76px;width:1px;height:20px;background:#D0D0D0;"></div>
<svg style="position:absolute;left:648px;top:75px;" width="20" height="21" viewBox="0 0 20 21"><g transform="translate(-648,-75)"><text x="654.9" y="84.4" font-family="Liberation Sans" font-size="8.6" font-weight="bold" fill="#3F6EB5" text-anchor="middle">A</text><text x="654.9" y="93" font-family="Liberation Sans" font-size="8.6" font-weight="bold" fill="#7A4FB5" text-anchor="middle">Z</text><path d="M662.3 78.2 V92.6 M659.6 89.8 L662.3 92.6 L665 89.8" fill="none" stroke="#5E5E5E" stroke-width="1.1"/></g></svg>
<div style="position:absolute;left:673px;top:76px;width:1px;height:20px;background:#D0D0D0;"></div>
<svg style="position:absolute;left:682px;top:77px;" width="14" height="17" viewBox="0 0 14 17"><g transform="translate(-682,-77)"><path d="M689.2 80.2 H694 V81.6 H693.1 V92.1 H691.7 V81.6 H690.1 V92.1 H688.7 V87.2 A3.5 3.5 0 0 1 689.2 80.2 Z" fill="#5E5E5E"/></g></svg>
<svg style="position:absolute;left:470px;top:108px;" width="20" height="16" viewBox="0 0 20 16"><g transform="translate(-470,-108)"><rect x="472.9" y="111.85" width="14.10" height="1.1" fill="#5E5E5E"/><rect x="472.9" y="114.85" width="10.10" height="1.1" fill="#5E5E5E"/><rect x="472.9" y="117.85" width="14.10" height="1.1" fill="#5E5E5E"/><rect x="472.9" y="120.85" width="10.10" height="1.1" fill="#5E5E5E"/></g></svg>
<svg style="position:absolute;left:494px;top:108px;" width="20" height="16" viewBox="0 0 20 16"><g transform="translate(-494,-108)"><rect x="497.1" y="111.85" width="13.90" height="1.1" fill="#5E5E5E"/><rect x="499.0" y="114.85" width="10.10" height="1.1" fill="#5E5E5E"/><rect x="497.1" y="117.85" width="13.90" height="1.1" fill="#5E5E5E"/><rect x="499.0" y="120.85" width="10.10" height="1.1" fill="#5E5E5E"/></g></svg>
<svg style="position:absolute;left:543px;top:108px;" width="20" height="16" viewBox="0 0 20 16"><g transform="translate(-543,-108)"><rect x="545" y="111.85" width="14.00" height="1.1" fill="#5E5E5E"/><rect x="545" y="114.85" width="14.00" height="1.1" fill="#5E5E5E"/><rect x="545" y="117.85" width="14.00" height="1.1" fill="#5E5E5E"/><rect x="545" y="120.85" width="14.00" height="1.1" fill="#5E5E5E"/></g></svg>
<div style="position:absolute;left:508px;top:97px;width:31px;height:31px;border:4px solid #2451A4;background:linear-gradient(#D9D9D9,#F2F2F2 30%,#F2F2F2 70%,#D9D9D9);box-shadow:0 0 4px 2px rgba(0,0,0,0.22), inset 0 0 3px 1px rgba(0,0,0,0.18);"></div>
<div style="position:absolute;left:517px;top:106px;width:22px;height:23px;background:#C8C8C8;border:1px solid #7A7A7A;box-sizing:border-box;"></div>
<svg style="position:absolute;left:519px;top:108px;" width="20" height="16" viewBox="0 0 20 16"><g transform="translate(-519,-108)"><rect x="521" y="111.85" width="14.10" height="1.1" fill="#5E5E5E"/><rect x="525.2" y="114.85" width="9.90" height="1.1" fill="#5E5E5E"/><rect x="521" y="117.85" width="14.10" height="1.1" fill="#5E5E5E"/><rect x="525.2" y="120.85" width="9.90" height="1.1" fill="#5E5E5E"/></g></svg>
<div style="position:absolute;left:567px;top:107px;width:1px;height:21px;background:#D0D0D0;"></div>
<svg style="position:absolute;left:574px;top:107px;" width="18" height="20" viewBox="0 0 18 20"><g transform="translate(-574,-107)"><rect x="582.2" y="111.85" width="7.90" height="1.1" fill="#5E5E5E"/><rect x="582.2" y="114.75" width="7.90" height="1.1" fill="#5E5E5E"/><rect x="582.2" y="117.75" width="7.90" height="1.1" fill="#5E5E5E"/><rect x="582.2" y="120.85" width="7.90" height="1.1" fill="#5E5E5E"/><path d="M578.5 110 V124 M576 112.6 L578.5 110 L581 112.6 M576 121.4 L578.5 124 L581 121.4" fill="none" stroke="#3F6EB5" stroke-width="1.3"/></g></svg>
<svg style="position:absolute;left:595px;top:114.8px;" width="8" height="6" viewBox="0 0 8 6"><path d="M1 1.2 L3.9 4 L6.8 1.2" fill="none" stroke="#444" stroke-width="1.15"/></svg>
<div style="position:absolute;left:612px;top:107px;width:1px;height:21px;background:#D0D0D0;"></div>
<svg style="position:absolute;left:619px;top:107px;" width="19" height="20" viewBox="0 0 19 20"><g transform="translate(-619,-107)"><rect x="620.8" y="121.8" width="14.6" height="3" fill="#FFFFFF" stroke="#5E5E5E" stroke-width="1"/><path d="M622.6 114.8 L627.8 109.8 L633 114.8 L627.8 119.8 Z" fill="#FFFFFF" stroke="#5E5E5E" stroke-width="1"/><path d="M626.2 108.8 V113.4" stroke="#5E5E5E" stroke-width="1"/><path d="M633.4 113.8 Q636.6 116 634.6 118.8 Q632.6 117 633.4 113.8 Z" fill="#3F6EB5"/></g></svg>
<svg style="position:absolute;left:642px;top:114.8px;" width="8" height="6" viewBox="0 0 8 6"><path d="M1 1.2 L3.9 4 L6.8 1.2" fill="none" stroke="#444" stroke-width="1.15"/></svg>
<svg style="position:absolute;left:658px;top:107px;" width="18" height="20" viewBox="0 0 18 20"><g transform="translate(-658,-107)"><rect x="660.2" y="109.8" width="1" height="1" fill="#5E5E5E"/><rect x="662.2" y="109.8" width="1" height="1" fill="#5E5E5E"/><rect x="664.2" y="109.8" width="1" height="1" fill="#5E5E5E"/><rect x="666.2" y="109.8" width="1" height="1" fill="#5E5E5E"/><rect x="668.2" y="109.8" width="1" height="1" fill="#5E5E5E"/><rect x="670.2" y="109.8" width="1" height="1" fill="#5E5E5E"/><rect x="672.2" y="109.8" width="1" height="1" fill="#5E5E5E"/><rect x="660.2" y="115.1" width="1" height="1" fill="#5E5E5E"/><rect x="662.2" y="115.1" width="1" height="1" fill="#5E5E5E"/><rect x="664.2" y="115.1" width="1" height="1" fill="#5E5E5E"/><rect x="666.2" y="115.1" width="1" height="1" fill="#5E5E5E"/><rect x="668.2" y="115.1" width="1" height="1" fill="#5E5E5E"/><rect x="670.2" y="115.1" width="1" height="1" fill="#5E5E5E"/><rect x="672.2" y="115.1" width="1" height="1" fill="#5E5E5E"/><rect x="660.2" y="120.1" width="1" height="1" fill="#5E5E5E"/><rect x="662.2" y="120.1" width="1" height="1" fill="#5E5E5E"/><rect x="664.2" y="120.1" width="1" height="1" fill="#5E5E5E"/><rect x="666.2" y="120.1" width="1" height="1" fill="#5E5E5E"/><rect x="668.2" y="120.1" width="1" height="1" fill="#5E5E5E"/><rect x="670.2" y="120.1" width="1" height="1" fill="#5E5E5E"/><rect x="672.2" y="120.1" width="1" height="1" fill="#5E5E5E"/><rect x="660.2" y="110.8" width="1" height="1" fill="#5E5E5E"/><rect x="660.2" y="112.8" width="1" height="1" fill="#5E5E5E"/><rect x="660.2" y="114.8" width="1" height="1" fill="#5E5E5E"/><rect x="660.2" y="116.8" width="1" height="1" fill="#5E5E5E"/><rect x="660.2" y="118.8" width="1" height="1" fill="#5E5E5E"/><rect x="660.2" y="120.8" width="1" height="1" fill="#5E5E5E"/><rect x="666.0" y="110.8" width="1" height="1" fill="#5E5E5E"/><rect x="666.0" y="112.8" width="1" height="1" fill="#5E5E5E"/><rect x="666.0" y="114.8" width="1" height="1" fill="#5E5E5E"/><rect x="666.0" y="116.8" width="1" height="1" fill="#5E5E5E"/><rect x="666.0" y="118.8" width="1" height="1" fill="#5E5E5E"/><rect x="666.0" y="120.8" width="1" height="1" fill="#5E5E5E"/><rect x="672.1" y="110.8" width="1" height="1" fill="#5E5E5E"/><rect x="672.1" y="112.8" width="1" height="1" fill="#5E5E5E"/><rect x="672.1" y="114.8" width="1" height="1" fill="#5E5E5E"/><rect x="672.1" y="116.8" width="1" height="1" fill="#5E5E5E"/><rect x="672.1" y="118.8" width="1" height="1" fill="#5E5E5E"/><rect x="672.1" y="120.8" width="1" height="1" fill="#5E5E5E"/><rect x="660" y="122.20" width="13.20" height="1.2" fill="#5E5E5E"/></g></svg>
<svg style="position:absolute;left:681px;top:114.8px;" width="8" height="6" viewBox="0 0 8 6"><path d="M1 1.2 L3.9 4 L6.8 1.2" fill="none" stroke="#444" stroke-width="1.15"/></svg>
<div style="position:absolute;left:719px;top:72px;width:72px;height:56px;box-sizing:border-box;border:1px solid #ACACAC;box-shadow:inset 0 0 0 2px #D4D4D4;"></div>
<div style="position:absolute;left:1152px;top:70px;width:1px;height:59px;background:#DCDCDC;"></div>
<div style="position:absolute;left:1153px;top:71px;width:13px;height:20px;background:#E6E6E6;"></div>
<div style="position:absolute;left:1153px;top:91px;width:13px;height:1px;background:#E1E1E1;"></div>
<div style="position:absolute;left:1153px;top:110px;width:13px;height:1px;background:#E1E1E1;"></div>
<svg style="position:absolute;left:1155px;top:77px;" width="9" height="6" viewBox="0 0 9 6"><path d="M1.5 4.5 H7.5 L4.5 1.5 Z" fill="#B9B9B9"/></svg>
<svg style="position:absolute;left:1155px;top:98px;" width="9" height="6" viewBox="0 0 9 6"><path d="M1.5 1.5 H7.5 L4.5 4.5 Z" fill="#555"/></svg>
<svg style="position:absolute;left:1155px;top:115px;" width="9" height="9" viewBox="0 0 9 9"><rect x="1.5" y="1" width="6" height="1.1" fill="#555"/><path d="M1.5 3.6 H7.5 L4.5 6.6 Z" fill="#555"/></svg>
<svg style="position:absolute;left:1189px;top:72px;" width="16" height="14" viewBox="0 0 16 14"><circle cx="9.6" cy="5.6" r="3.6" fill="none" stroke="#4A6FB0" stroke-width="1.6"/><path d="M6.9 8.4 L2.2 12.6" stroke="#4A6FB0" stroke-width="2.4" stroke-linecap="round"/></svg>
<svg style="position:absolute;left:1241px;top:75.6px;" width="8" height="6" viewBox="0 0 8 6"><path d="M1 1.2 L3.9 4 L6.8 1.2" fill="none" stroke="#444" stroke-width="1.15"/></svg>
<svg style="position:absolute;left:1188px;top:93px;" width="19" height="16" viewBox="0 0 19 16"><text x="0.4" y="7.4" font-family="Liberation Sans" font-size="10.5" fill="#7B64B0" textLength="11">ab</text><text x="4.2" y="14.8" font-family="Liberation Sans" font-size="10.5" fill="#3F6EB5" textLength="12">ac</text><path d="M2.6 10.2 V12.6 H4.2 M3 11.6 L4.2 12.6 L3 13.6" fill="none" stroke="#3F6EB5" stroke-width="0.8"/></svg>
<svg style="position:absolute;left:1192px;top:116px;" width="12" height="16" viewBox="0 0 12 16"><path d="M1.6 1.2 V12.6 L4.4 9.8 L6.8 14.6 L8.6 13.8 L6.2 9.2 H10 Z" fill="#FFFFFF" stroke="#5E5E5E" stroke-width="1" stroke-linejoin="round"/></svg>
<svg style="position:absolute;left:1242px;top:120.8px;" width="8" height="6" viewBox="0 0 8 6"><path d="M1 1.2 L3.9 4 L6.8 1.2" fill="none" stroke="#444" stroke-width="1.15"/></svg>
<svg style="position:absolute;left:1288px;top:79px;" width="13" height="13" viewBox="0 0 13 13"><circle cx="6.6" cy="6.2" r="5" fill="#F7941D"/></svg>
<svg style="position:absolute;left:1346px;top:145px;" width="13" height="8" viewBox="0 0 13 8"><path d="M1.5 6.5 L6.5 1.5 L11.5 6.5" fill="none" stroke="#444" stroke-width="1.2"/></svg>
<svg style="position:absolute;left:694px;top:39px;" width="15" height="20" viewBox="0 0 15 20"><path d="M5.2 13.4 Q5 11.4 3.4 9.6 A5.1 5.1 0 1 1 11.4 9.6 Q9.8 11.4 9.6 13.4 Z" fill="none" stroke="#FFFFFF" stroke-width="1.1"/><rect x="5.6" y="13.6" width="3.6" height="2" fill="none" stroke="#FFFFFF" stroke-width="1"/><rect x="5.8" y="17" width="3.2" height="1.1" fill="#FFFFFF"/></svg>
<div style="position:absolute;left:1350px;top:159px;width:14px;height:15px;background:#FFFFFF;border:1px solid #ABABAB;box-sizing:border-box;"></div>
<svg style="position:absolute;left:1352px;top:162px;" width="10" height="8" viewBox="0 0 10 8"><path d="M1.2 6 H8.8 L5 2 Z" fill="#222"/></svg>
<div style="position:absolute;left:1350px;top:183px;width:14px;height:272px;background:#FFFFFF;border:1px solid #8A8A8A;box-sizing:border-box;"></div>
<div style="position:absolute;left:1350px;top:689px;width:14px;height:15px;background:#FFFFFF;border:1px solid #ABABAB;box-sizing:border-box;"></div>
<svg style="position:absolute;left:1352px;top:692px;" width="10" height="8" viewBox="0 0 10 8"><path d="M1.2 2 H8.8 L5 6 Z" fill="#222"/></svg>
<svg style="position:absolute;left:184px;top:709px;" width="17" height="15" viewBox="0 0 17 15"><path d="M1.5 1.6 Q4.5 0.8 7.5 2 V12.6 Q4.5 11.6 1.5 12.4 Z M7.5 2 Q9.5 1 11.5 1.4 M7.5 12.6 Q9.5 11.6 13.5 12.2 V8.5 M7.5 12.6 V14" fill="none" stroke="#5A5A5A" stroke-width="1"/><path d="M10.4 2.4 L14.6 6.8 M14.6 2.4 L10.4 6.8" stroke="#5A5A5A" stroke-width="1.1"/></svg>
<svg style="position:absolute;left:350px;top:709px;" width="18" height="16" viewBox="0 0 18 16"><path d="M4.4 3.4 A6 6 0 0 0 7 14.4" fill="none" stroke="#5A5A5A" stroke-width="1.1" stroke-dasharray="2 1.3"/><path d="M8.2 0.8 V6.6 M6 4.6 L8.2 6.8 L10.4 4.6" fill="none" stroke="#5A5A5A" stroke-width="1.1"/><path d="M11.8 2.6 L15.4 5.8 L12.6 7.6" fill="none" stroke="#5A5A5A" stroke-width="1.1"/><path d="M8.8 10.8 L11.2 13.6 L16.4 7.8" fill="none" stroke="#333" stroke-width="1.6"/></svg>
<svg style="position:absolute;left:1084px;top:709px;" width="15" height="15" viewBox="0 0 15 15"><path d="M1 1.5 H5.4 Q6.8 1.5 7 2.8 Q7.2 1.5 8.6 1.5 H13 V12.2 H8.6 Q7.2 12.2 7 13.6 Q6.8 12.2 5.4 12.2 H1 Z M7 2.8 V13.6" fill="none" stroke="#5A5A5A" stroke-width="1"/><path d="M2.6 4 H5.4 M2.6 6 H5.4 M2.6 8 H5.4 M2.6 10 H5.4 M8.6 4 H11.4 M8.6 6 H11.4 M8.6 8 H11.4 M8.6 10 H11.4" stroke="#5A5A5A" stroke-width="0.8"/></svg>
<svg style="position:absolute;left:1124px;top:709px;" width="16" height="15" viewBox="0 0 16 15"><rect x="1.5" y="1" width="13" height="12.4" fill="none" stroke="#5A5A5A" stroke-width="1"/><path d="M3.4 3.5 H12.6 M3.4 5.5 H12.6 M3.4 7.5 H12.6 M3.4 9.5 H12.6 M3.4 11.3 H12.6" stroke="#5A5A5A" stroke-width="1"/></svg>
<svg style="position:absolute;left:1164px;top:709px;" width="16" height="15" viewBox="0 0 16 15"><path d="M1.2 1 H12 V6 M1.2 1 V12.2 H6.6" fill="none" stroke="#5A5A5A" stroke-width="1"/><path d="M3 3.4 H10 M3 5.4 H10 M3 7.4 H7 M3 9.4 H6" stroke="#5A5A5A" stroke-width="0.9"/><circle cx="10.8" cy="10.6" r="3.7" fill="#5A5A5A"/><path d="M8.6 9.2 Q10.8 11 12.6 8.8 M10 13.8 Q10.6 11.6 13.6 11.6" fill="none" stroke="#F3F3F3" stroke-width="0.8"/></svg>
<div style="position:absolute;left:1198px;top:716.5px;width:7.5px;height:1.2px;background:#555;"></div>
<div style="position:absolute;left:1211px;top:716.6px;width:100px;height:1px;background:#666;"></div>
<div style="position:absolute;left:1254.3px;top:712px;width:4.7px;height:10.8px;background:#444;"></div>
<div style="position:absolute;left:1260.6px;top:713.5px;width:1px;height:7px;background:#666;"></div>
<div style="position:absolute;left:1316px;top:716.5px;width:7.5px;height:1.2px;background:#555;"></div>
<div style="position:absolute;left:1319.2px;top:713.2px;width:1.2px;height:7.6px;background:#555;"></div>
<svg style="position:absolute;left:15px;top:739px;" width="18" height="18" viewBox="0 0 18 18"><path d="M0.6 2.6 L7.2 1.6 V8.2 H0.6 Z M8.2 1.4 L17.2 0.2 V8.2 H8.2 Z M0.6 9.2 H7.2 V15.8 L0.6 14.8 Z M8.2 9.2 H17.2 V17.2 L8.2 16 Z" fill="#FFFFFF"/></svg>
<div style="position:absolute;left:55px;top:765.6px;width:40px;height:1.5px;background:#AEB9BD;"></div>
<svg style="position:absolute;left:63px;top:737px;" width="24" height="21" viewBox="0 0 24 21"><path d="M1 2.2 Q1 1.4 1.8 1.4 H8.6 L10.2 3 H22.2 V19 H1 Z" fill="#E5A72A"/><rect x="1" y="3.6" width="21.4" height="15.4" fill="#FFD35C"/><path d="M4.8 20.4 V11.8 H18.6 V20.4 H14.4 V15.2 H9 V20.4 Z" fill="#3E9BE0"/><rect x="9" y="15.2" width="5.4" height="4.6" fill="#FFC740"/></svg>
<svg style="position:absolute;left:111px;top:735px;" width="26" height="26" viewBox="0 0 26 26"><defs><clipPath id="cc"><circle cx="13" cy="13" r="12.2"/></clipPath></defs><g clip-path="url(#cc)"><rect width="26" height="26" fill="#1EA446"/><path d="M13 13 L2.4 6.9 A12.2 12.2 0 0 1 23.6 6.9 Z" fill="#DB4437"/><path d="M13 13 L23.6 6.9 A12.2 12.2 0 0 1 13 25.2 Z" fill="#FFCD40"/><path d="M13 13 L2.4 6.9 L8.2 17 Z" fill="#DB4437"/><path d="M13 13 L13 25.2 L18.8 16 Z" fill="#FFCD40"/></g><circle cx="13" cy="13" r="5.6" fill="#FFFFFF"/><circle cx="13" cy="13" r="4.4" fill="#4A8AF4"/></svg>
<div style="position:absolute;left:104px;top:765.6px;width:40px;height:1.5px;background:#AEB9BD;"></div>
<div style="position:absolute;left:149px;top:765.6px;width:48px;height:1.6px;background:#A9C3DC;"></div>
<svg style="position:absolute;left:159px;top:736px;" width="28" height="24" viewBox="0 0 28 24"><rect x="8" y="1" width="18" height="5.4" fill="#41A5EE"/><rect x="8" y="6.4" width="18" height="5.3" fill="#2B7CD3"/><rect x="8" y="11.7" width="18" height="5.3" fill="#185ABD"/><rect x="8" y="17" width="18" height="5.4" rx="0.6" fill="#103F91"/><rect x="1.4" y="5.7" width="13.5" height="12.5" rx="1" fill="#185ABD"/><path d="M3.6 8.4 L5.4 15.4 L7.3 10.4 L9.1 15.4 L10.9 8.4" fill="none" stroke="#FFFFFF" stroke-width="1.5" stroke-linejoin="miter"/></svg>
<svg style="position:absolute;left:209px;top:737px;" width="25" height="21" viewBox="0 0 25 21"><rect x="1.2" y="1.4" width="22" height="18.4" fill="#0C0C0C" stroke="#9AA4A8" stroke-width="1"/><rect x="1.6" y="1.6" width="21.2" height="1.8" fill="#C8D0D4"/><text x="3.6" y="9.6" font-family="Liberation Mono" font-size="6" fill="#E6E6E6">C:\</text><rect x="12.2" y="8.6" width="7" height="0.9" fill="#E6E6E6"/></svg>
<div style="position:absolute;left:202px;top:765.6px;width:40px;height:1.5px;background:#AEB9BD;"></div>
<svg style="position:absolute;left:1083px;top:743px;" width="15" height="9" viewBox="0 0 15 9"><path d="M1.2 7.6 L7.2 1.6 L13.2 7.6" fill="none" stroke="#FFFFFF" stroke-width="1.2"/></svg>
<svg style="position:absolute;left:1104px;top:741px;" width="20" height="16" viewBox="0 0 20 16"><path d="M3.6 12 Q0.8 12 0.8 9.2 Q0.8 6.6 3.4 6.4 Q4 2.2 8.2 2.2 Q11.6 2.2 12.6 5.2 Q15.4 5.2 15.4 8.4 Q15.4 12 12.4 12 Z" fill="#C9CDD2"/><circle cx="13.6" cy="10.1" r="4.7" fill="#4FB8F0"/><rect x="13" y="9" width="1.3" height="3.8" fill="#0F2238"/><rect x="13" y="7" width="1.3" height="1.3" fill="#0F2238"/></svg>
<svg style="position:absolute;left:1129px;top:742px;" width="19" height="13" viewBox="0 0 19 13"><path d="M2.2 1.2 V4 M4.6 1.2 V4 M1 4 H5.8 V6 Q5.8 8 3.4 8 Q1 8 1 6 Z M3.4 8 V12" fill="none" stroke="#FFFFFF" stroke-width="1"/><rect x="5.4" y="3" width="11.4" height="7.6" fill="none" stroke="#FFFFFF" stroke-width="1.1"/><rect x="6.8" y="4.4" width="8.6" height="4.8" fill="#FFFFFF"/><rect x="16.8" y="5.2" width="1.2" height="3.2" fill="#FFFFFF"/></svg>
<svg style="position:absolute;left:1153px;top:741px;" width="18" height="15" viewBox="0 0 18 15"><rect x="4" y="1.4" width="12.6" height="8.8" fill="none" stroke="#FFFFFF" stroke-width="1.1"/><path d="M10.3 10.2 V13.4 M6.6 13.6 H14" stroke="#FFFFFF" stroke-width="1.1"/><rect x="1" y="1.4" width="3.6" height="3.4" fill="none" stroke="#FFFFFF" stroke-width="1"/><path d="M2.8 4.8 V13.6" stroke="#FFFFFF" stroke-width="1"/></svg>
<svg style="position:absolute;left:1177px;top:740px;" width="19" height="16" viewBox="0 0 19 16"><path d="M1.2 5.6 H3.8 L7.4 2 V14 L3.8 10.4 H1.2 Z" fill="none" stroke="#FFFFFF" stroke-width="1.1" stroke-linejoin="round"/><path d="M10 6.2 Q11.2 8 10 9.8" fill="none" stroke="#FFFFFF" stroke-width="1"/><path d="M12.6 4.2 Q15 8 12.6 11.8" fill="none" stroke="#B9BEC6" stroke-width="1"/><path d="M15.2 1.8 Q18.8 8 15.2 14.2" fill="none" stroke="#8C939C" stroke-width="1"/></svg>
<svg style="position:absolute;left:1324px;top:739px;" width="19" height="18" viewBox="0 0 19 18"><path d="M1 1 H17.2 V14.4 H10.6 L8.2 17 L6.4 14.4 H1 Z" fill="#FFFFFF"/><path d="M4 4.2 H14.2 M4 7.2 H14.2 M4 10.2 H11" stroke="#1B2444" stroke-width="1.1"/><circle cx="14.4" cy="13.6" r="3.4" fill="#1B2444"/><path d="M12.4 15.4 Q14.2 10.4 16.6 12.2" fill="none" stroke="#FFFFFF" stroke-width="1.2"/></svg>
<div style="position:absolute;left:1361px;top:729px;width:1px;height:38px;background:#8C95A8;"></div>
<div style="position:absolute;left:0px;top:767px;width:1366px;height:1px;background:#0a0a0a;"></div>
<div style="position:absolute;left:1364px;top:0px;width:2px;height:728px;background:#141414;"></div>
</body></html>
